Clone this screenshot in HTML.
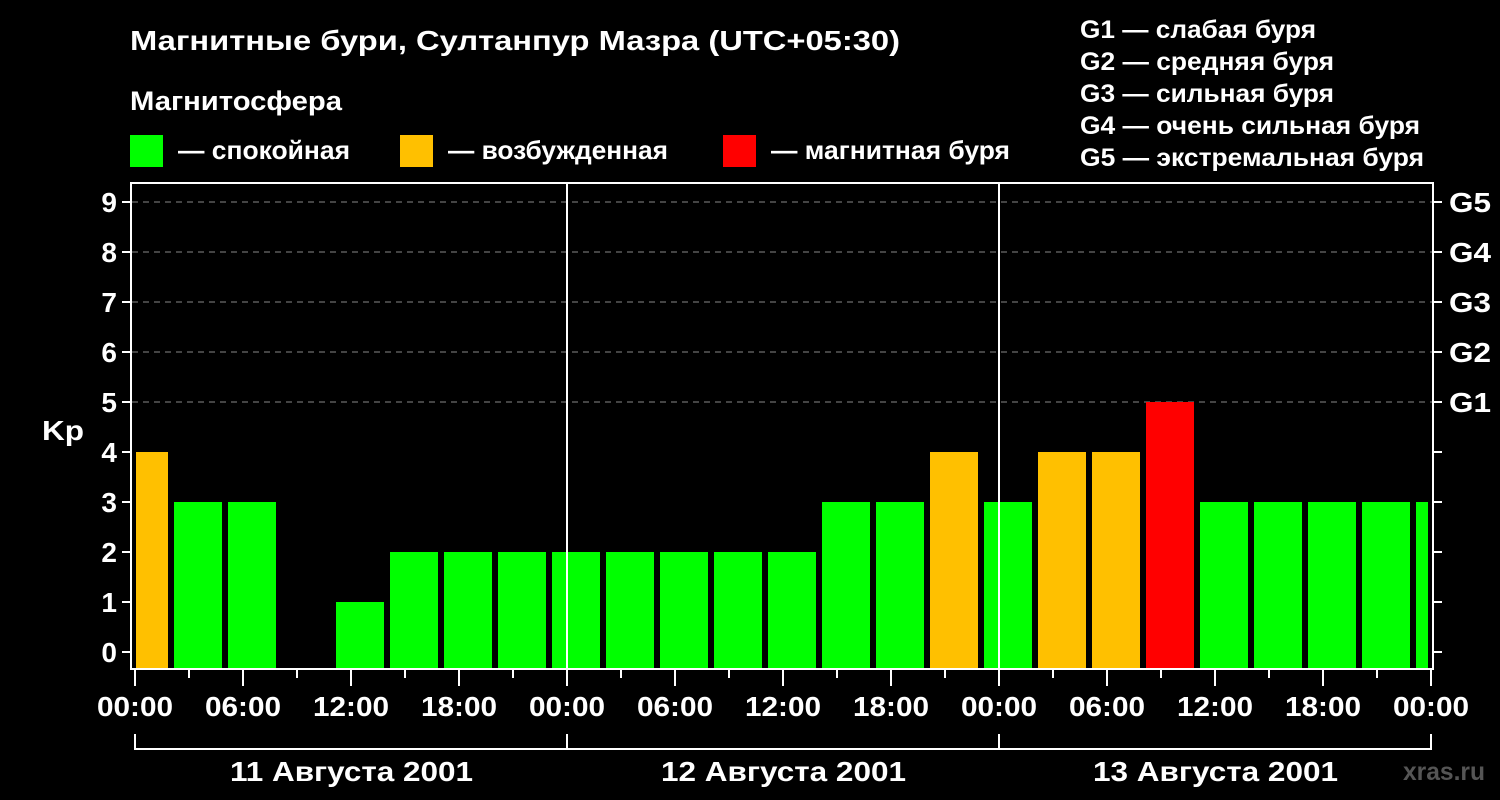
<!DOCTYPE html>
<html><head><meta charset="utf-8"><style>
html,body{margin:0;padding:0;background:#000;width:1500px;height:800px;overflow:hidden}
svg{display:block}
text{font-family:"Liberation Sans",Arial,sans-serif;font-weight:bold;fill:#fff}
</style></head><body>
<svg width="1500" height="800" xmlns="http://www.w3.org/2000/svg" font-family="Liberation Sans, Arial, sans-serif" font-weight="bold">
<rect width="1500" height="800" fill="#000"/>
<text x="130" y="50" font-size="28" textLength="770" lengthAdjust="spacingAndGlyphs">Магнитные бури, Султанпур Мазра (UTC+05:30)</text>
<text x="130" y="110" font-size="27" textLength="212" lengthAdjust="spacingAndGlyphs">Магнитосфера</text>
<rect x="130" y="135" width="33" height="32" fill="#00ff00"/>
<text x="178" y="159" font-size="26" textLength="172" lengthAdjust="spacingAndGlyphs">— спокойная</text>
<rect x="400" y="135" width="33" height="32" fill="#ffc000"/>
<text x="448" y="159" font-size="26" textLength="220" lengthAdjust="spacingAndGlyphs">— возбужденная</text>
<rect x="723" y="135" width="33" height="32" fill="#ff0000"/>
<text x="771" y="159" font-size="26" textLength="239" lengthAdjust="spacingAndGlyphs">— магнитная буря</text>
<g font-size="25">
<text x="1080" y="38" textLength="236" lengthAdjust="spacingAndGlyphs">G1 — слабая буря</text>
<text x="1080" y="70" textLength="254" lengthAdjust="spacingAndGlyphs">G2 — средняя буря</text>
<text x="1080" y="102" textLength="254" lengthAdjust="spacingAndGlyphs">G3 — сильная буря</text>
<text x="1080" y="134" textLength="340" lengthAdjust="spacingAndGlyphs">G4 — очень сильная буря</text>
<text x="1080" y="166" textLength="344" lengthAdjust="spacingAndGlyphs">G5 — экстремальная буря</text>
</g>
<g stroke="#888" stroke-width="1" stroke-dasharray="6,5">
<line x1="132" y1="202" x2="1432" y2="202"/><line x1="132" y1="252" x2="1432" y2="252"/>
<line x1="132" y1="302" x2="1432" y2="302"/><line x1="132" y1="352" x2="1432" y2="352"/>
<line x1="132" y1="402" x2="1432" y2="402"/>
</g>
<g>
<rect x="136" y="452" width="32" height="216" fill="#ffc000"/>
<rect x="174" y="502" width="48" height="166" fill="#00ff00"/>
<rect x="228" y="502" width="48" height="166" fill="#00ff00"/>
<rect x="336" y="602" width="48" height="66" fill="#00ff00"/>
<rect x="390" y="552" width="48" height="116" fill="#00ff00"/>
<rect x="444" y="552" width="48" height="116" fill="#00ff00"/>
<rect x="498" y="552" width="48" height="116" fill="#00ff00"/>
<rect x="552" y="552" width="48" height="116" fill="#00ff00"/>
<rect x="606" y="552" width="48" height="116" fill="#00ff00"/>
<rect x="660" y="552" width="48" height="116" fill="#00ff00"/>
<rect x="714" y="552" width="48" height="116" fill="#00ff00"/>
<rect x="768" y="552" width="48" height="116" fill="#00ff00"/>
<rect x="822" y="502" width="48" height="166" fill="#00ff00"/>
<rect x="876" y="502" width="48" height="166" fill="#00ff00"/>
<rect x="930" y="452" width="48" height="216" fill="#ffc000"/>
<rect x="984" y="502" width="48" height="166" fill="#00ff00"/>
<rect x="1038" y="452" width="48" height="216" fill="#ffc000"/>
<rect x="1092" y="452" width="48" height="216" fill="#ffc000"/>
<rect x="1146" y="402" width="48" height="266" fill="#ff0000"/>
<rect x="1200" y="502" width="48" height="166" fill="#00ff00"/>
<rect x="1254" y="502" width="48" height="166" fill="#00ff00"/>
<rect x="1308" y="502" width="48" height="166" fill="#00ff00"/>
<rect x="1362" y="502" width="48" height="166" fill="#00ff00"/>
<rect x="1416" y="502" width="12" height="166" fill="#00ff00"/>
</g>
<g stroke="#fff" stroke-width="2" fill="none">
<rect x="131" y="183" width="1302" height="486"/>
<line x1="567" y1="183" x2="567" y2="669"/><line x1="999" y1="183" x2="999" y2="669"/>
<path d="M122 202H131M122 252H131M122 302H131M122 352H131M122 402H131M122 452H131M122 502H131M122 552H131M122 602H131M122 652H131
M1433 202H1442M1433 252H1442M1433 302H1442M1433 352H1442M1433 402H1442M1433 452H1442M1433 502H1442M1433 552H1442M1433 602H1442M1433 652H1442
M135 669V686M189 669V678M243 669V686M297 669V678M351 669V686M405 669V678M459 669V686M513 669V678M567 669V686M621 669V678M675 669V686M729 669V678M783 669V686M837 669V678M891 669V686M945 669V678M999 669V686M1053 669V678M1107 669V686M1161 669V678M1215 669V686M1269 669V678M1323 669V686M1377 669V678M1431 669V686"/>
<path d="M135 734V749H1431V734M567 734V749M999 734V749"/>
</g>
<g font-size="28" text-anchor="end">
<text x="117" y="212">9</text><text x="117" y="262">8</text><text x="117" y="312">7</text>
<text x="117" y="362">6</text><text x="117" y="412">5</text><text x="117" y="462">4</text>
<text x="117" y="512">3</text><text x="117" y="562">2</text><text x="117" y="612">1</text>
<text x="117" y="662">0</text>
</g>
<text x="42" y="440" font-size="28" textLength="42" lengthAdjust="spacingAndGlyphs">Kp</text>
<g font-size="28">
<text x="1449" y="212" textLength="42" lengthAdjust="spacingAndGlyphs">G5</text><text x="1449" y="262" textLength="42" lengthAdjust="spacingAndGlyphs">G4</text><text x="1449" y="312" textLength="42" lengthAdjust="spacingAndGlyphs">G3</text>
<text x="1449" y="362" textLength="42" lengthAdjust="spacingAndGlyphs">G2</text><text x="1449" y="412" textLength="42" lengthAdjust="spacingAndGlyphs">G1</text>
</g>
<g font-size="28">
<text x="97" y="716" textLength="76" lengthAdjust="spacingAndGlyphs">00:00</text>
<text x="205" y="716" textLength="76" lengthAdjust="spacingAndGlyphs">06:00</text>
<text x="313" y="716" textLength="76" lengthAdjust="spacingAndGlyphs">12:00</text>
<text x="421" y="716" textLength="76" lengthAdjust="spacingAndGlyphs">18:00</text>
<text x="529" y="716" textLength="76" lengthAdjust="spacingAndGlyphs">00:00</text>
<text x="637" y="716" textLength="76" lengthAdjust="spacingAndGlyphs">06:00</text>
<text x="745" y="716" textLength="76" lengthAdjust="spacingAndGlyphs">12:00</text>
<text x="853" y="716" textLength="76" lengthAdjust="spacingAndGlyphs">18:00</text>
<text x="961" y="716" textLength="76" lengthAdjust="spacingAndGlyphs">00:00</text>
<text x="1069" y="716" textLength="76" lengthAdjust="spacingAndGlyphs">06:00</text>
<text x="1177" y="716" textLength="76" lengthAdjust="spacingAndGlyphs">12:00</text>
<text x="1285" y="716" textLength="76" lengthAdjust="spacingAndGlyphs">18:00</text>
<text x="1393" y="716" textLength="76" lengthAdjust="spacingAndGlyphs">00:00</text>
</g>
<g font-size="28">
<text x="230" y="781" textLength="243" lengthAdjust="spacingAndGlyphs">11 Августа 2001</text>
<text x="661" y="781" textLength="245" lengthAdjust="spacingAndGlyphs">12 Августа 2001</text>
<text x="1093" y="781" textLength="245" lengthAdjust="spacingAndGlyphs">13 Августа 2001</text>
</g>
<text x="1403" y="780" font-size="25" style="fill:#555" textLength="82" lengthAdjust="spacingAndGlyphs">xras.ru</text>
</svg>
</body></html>
